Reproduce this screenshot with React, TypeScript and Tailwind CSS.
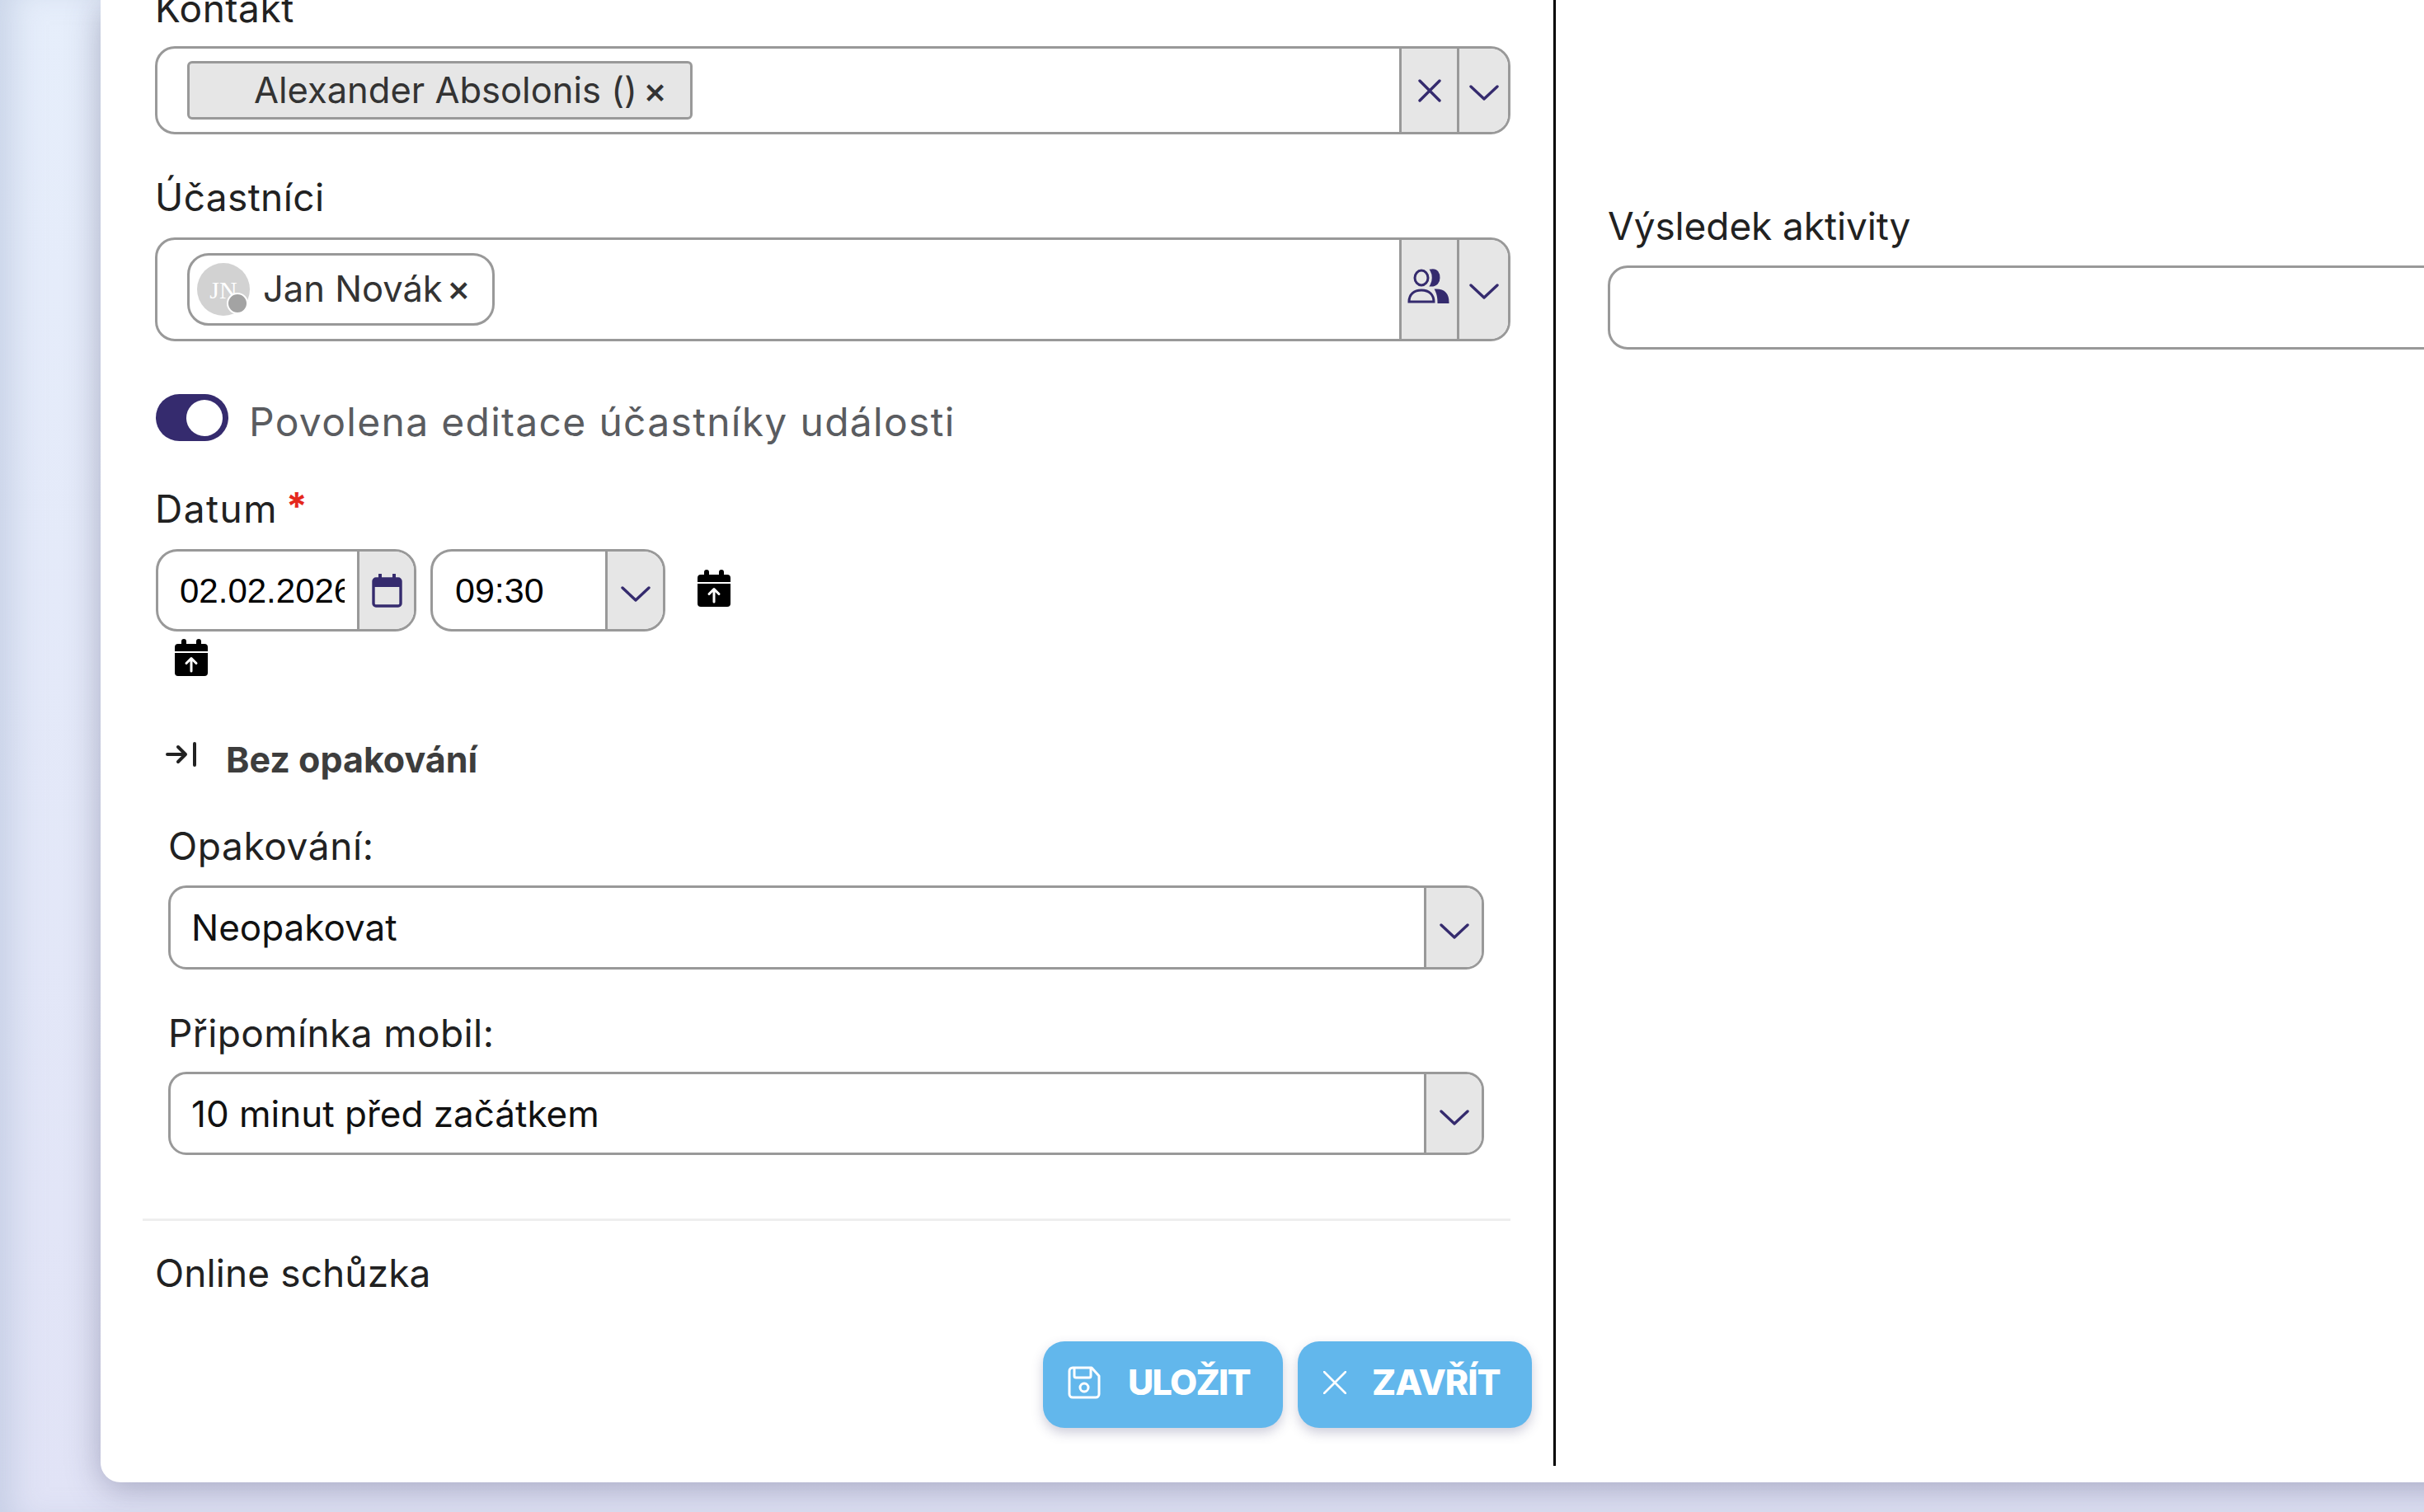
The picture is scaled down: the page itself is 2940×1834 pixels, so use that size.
const navy = '#352b6e'

function Chevron() {
  return (
    <svg viewBox="0 0 36 24" className="w-[36px] h-[24px]" fill="none" stroke={navy} strokeWidth="3.4" strokeLinecap="round" strokeLinejoin="round">
      <path d="M2 4 L18 19 L34 4" />
    </svg>
  )
}

function Cross() {
  return (
    <svg viewBox="0 0 28 28" className="w-[28px] h-[28px]" fill="none" stroke={navy} strokeWidth="3.4" strokeLinecap="round">
      <path d="M2 2 L26 26 M26 2 L2 26" />
    </svg>
  )
}

function Users() {
  return (
    <svg viewBox="0 0 52 42" className="w-[52px] h-[42px] -mt-[8px] -ml-[4px]" fill="none" stroke={navy} strokeWidth="3">
      <ellipse cx="18" cy="11" rx="8" ry="9" />
      <path d="M30 2 C37 1 39 6 39 11 C39 16 36 20 30 20 C33 15 33 7 30 2 Z" fill={navy} />
      <path d="M3 40 C3 31 9 26 18 26 C28 26 33 32 33 40 Z" />
      <path d="M36 26 C46 26 50 32 50 41 L39 41 C39 35 38 30 36 26 Z" fill={navy} />
    </svg>
  )
}

function NavyCalendar() {
  return (
    <svg viewBox="0 0 37 41" className="w-[37px] h-[41px]" fill="none">
      <path d="M10 1 V8 M27 1 V8" stroke={navy} strokeWidth="4" strokeLinecap="round" />
      <rect x="2" y="6" width="33" height="33" rx="3" stroke={navy} strokeWidth="3.4" />
      <path d="M2 6 H35 V16 H2 Z" fill={navy} />
    </svg>
  )
}

function UploadCalendar() {
  return (
    <svg viewBox="0 0 40 45" className="w-[40px] h-[45px]">
      <path d="M11 0 a3 3 0 0 1 3 3 V6 H26 V3 a3 3 0 0 1 6 0 V6 H36 a4 4 0 0 1 4 4 V15 H0 V10 a4 4 0 0 1 4 -4 H8 V3 a3 3 0 0 1 3 -3 Z" fill="#000" />
      <path d="M0 17 H40 V41 a4 4 0 0 1 -4 4 H4 a4 4 0 0 1 -4 -4 Z" fill="#000" />
      <path d="M20 39 V24 M14 29.5 L20 23.5 L26 29.5" fill="none" stroke="#fff" strokeWidth="3" strokeLinecap="round" strokeLinejoin="round" />
    </svg>
  )
}

function RepeatArrow() {
  return (
    <svg viewBox="0 0 37 30" className="w-[37px] h-[30px]" fill="none" stroke="#222" strokeWidth="4" strokeLinecap="round" strokeLinejoin="round">
      <path d="M2 15 H24 M15 6 L24 15 L15 24" />
      <path d="M35 2 V28" />
    </svg>
  )
}

function SaveIcon() {
  return (
    <svg viewBox="0 0 40 40" className="w-[40px] h-[40px]" fill="none" stroke="#fff" strokeWidth="3" strokeLinejoin="round">
      <path d="M6 2 H29 L38 12 V34 a4 4 0 0 1 -4 4 H6 a4 4 0 0 1 -4 -4 V6 a4 4 0 0 1 4 -4 Z" />
      <path d="M8 2 V12 a2 2 0 0 0 2 2 H26 a2 2 0 0 0 2 -2 V2" />
      <circle cx="20" cy="26" r="5" />
    </svg>
  )
}

function ThinCross() {
  return (
    <svg viewBox="0 0 28 28" className="w-[28px] h-[28px]" fill="none" stroke="#fff" strokeWidth="2.6" strokeLinecap="round">
      <path d="M1 1 L27 27 M27 1 L1 27" />
    </svg>
  )
}

function Label({ children, className = '' }: { children: React.ReactNode; className?: string }) {
  return <div className={`h-[60px] leading-[60px] text-[46px] text-[#212121] ${className}`}>{children}</div>
}

function SideCell({ children, width, drop = '' }: { children: React.ReactNode; width: string; drop?: string }) {
  return (
    <div className={`flex items-center justify-center bg-[#e6e6e6] border-l-[3px] border-[#999999] ${width} ${drop}`}>
      {children}
    </div>
  )
}

function TextSelect({ value, className }: { value: string; className: string }) {
  return (
    <div className={`flex ml-[16px] w-[1596px] border-[3px] border-[#999999] rounded-[22px] overflow-hidden ${className}`}>
      <div className="flex-1 flex items-center pl-[25px] text-[44px] text-[#111111]">{value}</div>
      <SideCell width="w-[70px]" drop="pt-[10px]"><Chevron /></SideCell>
    </div>
  )
}

function Button({ icon, text, width, gap, pad, tracking }: { icon: React.ReactNode; text: string; width: string; gap: string; pad: string; tracking: string }) {
  return (
    <div className={`flex items-center h-[105px] pb-[6px] rounded-[26px] bg-[#62b7ec] shadow-[0_6px_14px_rgba(60,60,110,0.25)] ${width} ${gap} ${pad}`}>
      {icon}
      <span className={`font-extrabold text-[43px] text-white ${tracking}`}>{text}</span>
    </div>
  )
}

export default function App() {
  return (
    <div className="relative w-[2940px] h-[1834px] overflow-hidden bg-gradient-to-b from-[#e6eefb] to-[#e1e3f6] shadow-[inset_30px_0_36px_-14px_rgba(175,190,215,0.5)] [font-family:Inter,sans-serif]">
      <div className="ml-[122px] w-[2900px] h-[1798px] bg-white rounded-bl-[24px] shadow-[0_8px_40px_rgba(60,60,100,0.36)]">
        <div className="flex h-[1778px]">
          {/* left column */}
          <div className="w-[1765px] shrink-0 h-full border-r-[3px] border-black pl-[66px] pr-[52px]">
            <Label className="-mt-[20px] tracking-[0.5px]">Kontakt</Label>
            <div className="flex mt-[16px] h-[107px] border-[3px] border-[#999999] rounded-[24px] overflow-hidden">
              <div className="flex-1 flex items-center pl-[36px]">
                <div className="flex items-center h-[71px] w-[613px] pl-[78px] bg-[#e6e6e6] border-[3px] border-[#999999] rounded-[6px] text-[43.5px] text-[#333333]">
                  <span>Alexander Absolonis ()</span>
                  <span className="ml-[7px] font-medium">×</span>
                </div>
              </div>
              <SideCell width="w-[70px]"><Cross /></SideCell>
              <SideCell width="w-[62px]" drop="pt-[6px]"><Chevron /></SideCell>
            </div>

            <Label className="mt-[46px] tracking-[0.4px]">Účastníci</Label>
            <div className="flex mt-[19px] h-[126px] border-[3px] border-[#999999] rounded-[24px] overflow-hidden">
              <div className="flex-1 flex items-center pl-[36px]">
                <div className="flex items-center h-[88px] w-[373px] pl-[9px] bg-white border-[3px] border-[#999999] rounded-[26px] text-[43.5px] text-[#333333]">
                  <div className="relative flex items-center justify-center w-[64px] h-[64px] rounded-full bg-[#d2d2d2] text-white text-[30px] [font-family:'Liberation_Serif',serif]">
                    JN
                    <div className="absolute right-[2px] bottom-[2px] w-[26px] h-[26px] rounded-full bg-[#a3a3a3] border-[2px] border-white" />
                  </div>
                  <span className="ml-[16px]">Jan Novák</span>
                  <span className="ml-[5px] font-medium -mt-[3px]">×</span>
                </div>
              </div>
              <SideCell width="w-[70px]"><Users /></SideCell>
              <SideCell width="w-[62px]" drop="pt-[6px]"><Chevron /></SideCell>
            </div>

            <div className="flex items-center mt-[64px] h-[57px]">
              <div className="flex items-center justify-end w-[88px] h-[57px] ml-[1px] pr-[7px] rounded-full bg-[#352b6e]">
                <div className="w-[44px] h-[44px] rounded-full bg-white" />
              </div>
              <span className="ml-[25px] pt-[10px] text-[48px] tracking-[1.3px] text-[#5a5c60]">Povolena editace účastníky události</span>
            </div>

            <Label className="mt-[52px] flex tracking-[1.5px]">
              Datum
              <span className="ml-[10px] -mt-[3px] text-[#e5281c] font-bold">*</span>
            </Label>
            <div className="flex items-start mt-[19px]">
              <div className="flex h-[100px] w-[316px] ml-[1px] border-[3px] border-[#999999] rounded-[26px] overflow-hidden">
                <div className="w-[241px] pl-[26px] pr-[15px] flex items-center">
                  <div className="overflow-hidden whitespace-nowrap text-[42px] text-black [font-family:'Liberation_Sans',sans-serif]">02.02.2026</div>
                </div>
                <SideCell width="flex-1"><NavyCalendar /></SideCell>
              </div>
              <div className="flex h-[100px] w-[285px] ml-[17px] border-[3px] border-[#999999] rounded-[26px] overflow-hidden">
                <div className="w-[209px] pl-[27px] flex items-center text-[43px] text-black [font-family:'Liberation_Sans',sans-serif]">09:30</div>
                <SideCell width="flex-1" drop="pt-[10px]"><Chevron /></SideCell>
              </div>
              <div className="ml-[39px] mt-[25px]"><UploadCalendar /></div>
            </div>
            <div className="ml-[24px] mt-[9px] w-[40px]"><UploadCalendar /></div>

            <div className="flex items-center mt-[71px] h-[60px] pl-[13px]">
              <div className="-mt-[12px]"><RepeatArrow /></div>
              <span className="ml-[36px] text-[43px] font-bold text-[#3d3d3d]">Bez opakování</span>
            </div>

            <Label className="mt-[45px] ml-[16px] tracking-[0.6px]">Opakování:</Label>
            <TextSelect value="Neopakovat" className="mt-[18px] h-[102px]" />
            <Label className="mt-[47px] ml-[16px] tracking-[0.4px]">Připomínka mobil:</Label>
            <TextSelect value="10 minut před začátkem" className="mt-[17px] h-[101px]" />

            <div className="mt-[77px] -ml-[15px] h-[3px] bg-[#eeeeee]" />
            <Label className="mt-[33px] tracking-[0.1px]">Online schůzka</Label>

            <div className="flex justify-end gap-[18px] mt-[53px] -mr-[26px]">
              <Button icon={<SaveIcon />} text="ULOŽIT" width="w-[291px]" gap="gap-[33px]" pad="pl-[30px]" tracking="tracking-[-1.7px]" />
              <Button icon={<ThinCross />} text="ZAVŘÍT" width="w-[284px]" gap="gap-[31px]" pad="pl-[31px]" tracking="tracking-[-1px]" />
            </div>
          </div>

          {/* right column */}
          <div className="flex-1 pl-[63px] pt-[244px]">
            <Label className="tracking-[-0.1px]">Výsledek aktivity</Label>
            <div className="mt-[18px] w-[1200px] h-[102px] border-[3px] border-[#999999] rounded-[24px]" />
          </div>
        </div>
      </div>
    </div>
  )
}
